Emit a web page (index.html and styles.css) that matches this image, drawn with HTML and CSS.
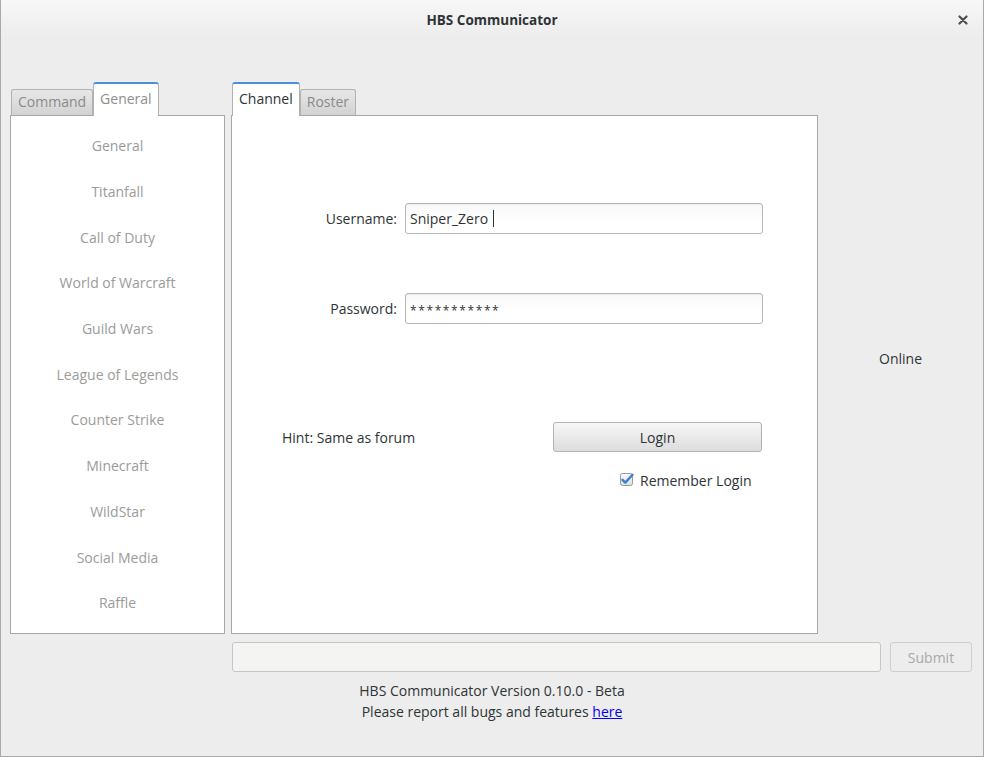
FILE: index.html
```html
<!DOCTYPE html>
<html>
<head>
<meta charset="utf-8">
<link rel="stylesheet" href="styles.css">
</head>
<body>
<div class="window">
  <div class="titlebar">
    <span class="title">HBS Communicator</span>
    <span class="close"><svg width="10" height="10" viewBox="0 0 10 10"><path d="M1.5 1.5 L8.5 8.5 M8.5 1.5 L1.5 8.5" stroke="#4a4f52" stroke-width="2.2" stroke-linecap="round"/></svg></span>
  </div>
  <div class="main">
    <div class="leftcol">
      <div class="tabbar">
        <div class="tab inactive">Command</div>
        <div class="tab active dim">General</div>
      </div>
      <div class="panel list">
        <div class="item">General</div>
        <div class="item">Titanfall</div>
        <div class="item">Call of Duty</div>
        <div class="item">World of Warcraft</div>
        <div class="item">Guild Wars</div>
        <div class="item">League of Legends</div>
        <div class="item">Counter Strike</div>
        <div class="item">Minecraft</div>
        <div class="item">WildStar</div>
        <div class="item">Social Media</div>
        <div class="item">Raffle</div>
      </div>
    </div>
    <div class="centercol">
      <div class="tabbar">
        <div class="tab active">Channel</div>
        <div class="tab inactive">Roster</div>
      </div>
      <div class="panel login">
        <div class="field">
          <span class="label">Username:</span>
          <div class="input"><span>Sniper_Zero</span><span class="caret"></span></div>
        </div>
        <div class="field second">
          <span class="label">Password:</span>
          <div class="input pw">***********</div>
        </div>
        <div class="actions">
          <span class="hint">Hint: Same as forum</span>
          <div class="button">Login</div>
        </div>
        <div class="remember">
          <svg class="check" width="14" height="14" viewBox="0 0 14 14">
            <defs><linearGradient id="cb" x1="0" y1="0" x2="0" y2="1"><stop offset="0" stop-color="#fbfbfb"/><stop offset="1" stop-color="#dedede"/></linearGradient></defs>
            <rect x="0.5" y="0.5" width="12" height="12" rx="2" fill="url(#cb)" stroke="#9a9a9a"/>
            <path d="M2.5 6.8 L5.3 9.6 L12.5 1.8" fill="none" stroke="#3b7fd1" stroke-width="2.4" stroke-linecap="round" stroke-linejoin="round"/>
          </svg>
          <span>Remember Login</span>
        </div>
      </div>
    </div>
    <div class="status">Online</div>
  </div>
  <div class="bottom">
    <div class="entry"></div>
    <div class="submit">Submit</div>
  </div>
  <div class="footer">
    <div>HBS Communicator Version 0.10.0 - Beta</div>
    <div>Please report all bugs and features <a href="#">here</a></div>
  </div>
</div>
</body>
</html>
```

FILE: styles.css
```css
html, body {
  margin: 0;
  padding: 0;
  background: #ededed;
}
body {
  font-family: "Open Sans", "Noto Sans", sans-serif;
  font-size: 14px;
  color: #2e3436;
}
.window {
  width: 984px;
  height: 757px;
  box-sizing: border-box;
  border: 1px solid #a9a9a9;
  border-top: none;
  background: #ededed;
  display: flex;
  flex-direction: column;
}
.titlebar {
  height: 40px;
  flex: none;
  position: relative;
  display: flex;
  align-items: center;
  justify-content: center;
  background: linear-gradient(#f7f7f7, #ececec);
}
.title {
  font-weight: bold;
  font-size: 13.5px;
  color: #2e3436;
}
.close {
  position: absolute;
  right: 15px;
  top: 15px;
  width: 10px;
  height: 10px;
  display: flex;
}
.main {
  display: flex;
  padding: 42px 0 0 9px;
  height: 552px;
  flex: none;
}
.leftcol {
  width: 215px;
  display: flex;
  flex-direction: column;
}
.centercol {
  width: 587px;
  margin-left: 6px;
  display: flex;
  flex-direction: column;
}
.tabbar {
  display: flex;
  align-items: flex-end;
  height: 34px;
  padding-left: 1px;
  position: relative;
  z-index: 1;
  margin-bottom: -1px;
}
.tab {
  box-sizing: border-box;
  border: 1px solid #b1b1b1;
  border-bottom: none;
  border-radius: 3px 3px 0 0;
  padding: 0 6px;
  display: flex;
  align-items: center;
}
.tab.inactive {
  height: 26px;
  background: linear-gradient(#e8e8e8, #d2d2d2);
  color: #8a8a8a;
  margin-bottom: 1px;
  padding-bottom: 3px;
}
.tab.active {
  height: 34px;
  background: #fff;
  border-top: 2px solid #4a90d9;
  color: #2e3436;
  padding-bottom: 3px;
}
.tab.active.dim {
  color: #8e8e8e;
}
.panel {
  flex: 1;
  background: #fff;
  border: 1px solid #a7a7a7;
  box-sizing: border-box;
}
.list {
  padding-top: 7px;
}
.item {
  height: 45.7px;
  display: flex;
  align-items: center;
  justify-content: center;
  color: #9b9b9b;
}
.login {
  padding-top: 87px;
  display: flex;
  flex-direction: column;
}
.field {
  display: flex;
  align-items: center;
  height: 31px;
}
.field.second {
  margin-top: 59px;
}
.label {
  width: 165px;
  text-align: right;
  margin-right: 8px;
}
.input {
  width: 358px;
  height: 31px;
  box-sizing: border-box;
  border: 1px solid #b7b7b7;
  border-radius: 3px;
  background: linear-gradient(#f9f9f9, #ffffff 60%);
  box-shadow: inset 0 1px 2px rgba(0,0,0,0.06);
  display: flex;
  align-items: center;
  padding-left: 4px;
  color: #2e3436;
}
.caret {
  display: inline-block;
  width: 1px;
  height: 17px;
  background: #2e3436;
  margin-left: 5px;
}
.pw {
  letter-spacing: 1.6px;
  font-size: 12px;
  padding-top: 3px;
}
.actions {
  margin-top: 98px;
  display: flex;
  align-items: center;
  height: 30px;
}
.hint {
  width: 321px;
  box-sizing: border-box;
  padding-left: 50px;
}
.button {
  width: 209px;
  height: 30px;
  box-sizing: border-box;
  border: 1px solid #b3b3b3;
  border-radius: 3px;
  background: linear-gradient(#f6f6f6, #dddddd);
  display: flex;
  align-items: center;
  justify-content: center;
}
.remember {
  margin-top: 19px;
  padding-left: 388px;
  display: flex;
  align-items: center;
  height: 18px;
}
.check {
  margin-right: 6px;
}
.status {
  flex: 1;
  display: flex;
  align-items: center;
  justify-content: center;
}
.bottom {
  display: flex;
  padding-left: 231px;
  margin-top: 8px;
  align-items: flex-start;
}
.entry {
  width: 649px;
  height: 30px;
  box-sizing: border-box;
  border: 1px solid #c6c6c6;
  border-radius: 3px;
  background: #f4f4f2;
}
.submit {
  margin-left: 9px;
  width: 82px;
  height: 30px;
  box-sizing: border-box;
  border: 1px solid #cfcfcf;
  border-radius: 3px;
  background: #ededed;
  color: #a8a8a8;
  display: flex;
  align-items: center;
  justify-content: center;
}
.footer {
  margin-top: 8px;
  text-align: center;
  line-height: 21px;
  color: #2e3436;
}
.footer a {
  color: #0000ee;
  text-decoration: underline;
}
```
